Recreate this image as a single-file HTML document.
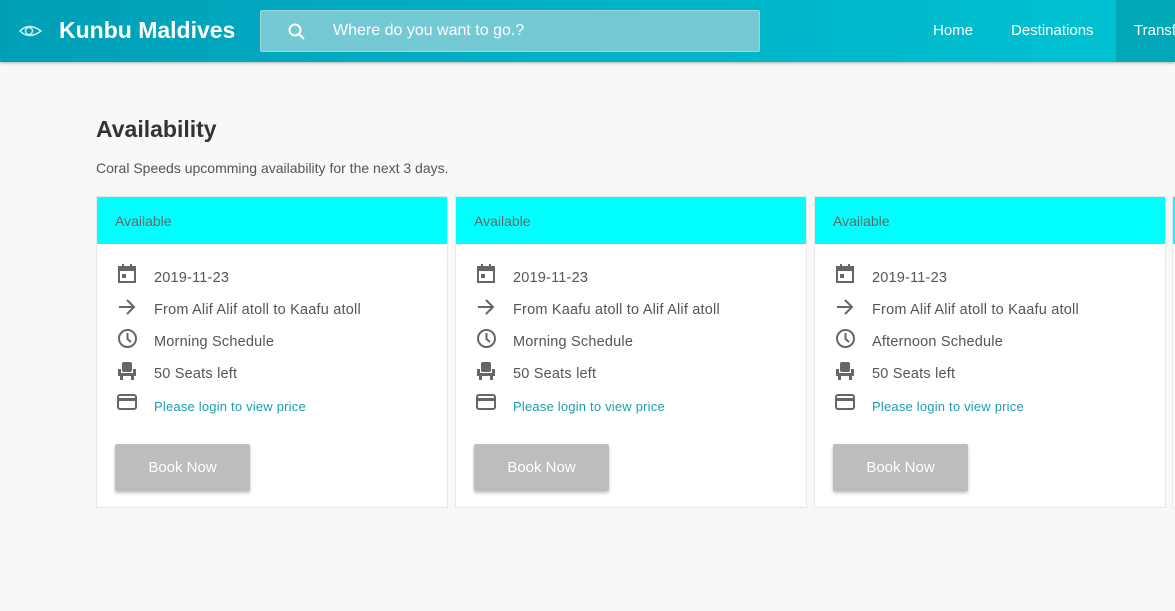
<!DOCTYPE html>
<html><head><style>
body{margin:0;width:1175px;height:611px;overflow:hidden;background:#f8f8f8;font-family:"Liberation Sans",sans-serif;position:relative}
.hdr{position:absolute;left:0;top:0;width:1175px;height:62px;background:linear-gradient(90deg,#009fb7,#00c3d3);box-shadow:0 1px 3px rgba(0,0,0,.3)}
.logo{position:absolute;left:59px;top:17px;color:#fff;font-weight:bold;font-size:23px}
.search{position:absolute;left:260px;top:10px;width:498px;height:40px;background:#74c9d4;border:1px solid #9ad7df;border-radius:2px}
.search span{position:absolute;left:72px;top:11px;color:#fff;font-size:16px}
.nav{position:absolute;top:22px;color:#fff;font-size:15px}
.act{position:absolute;left:1116px;top:0;width:59px;height:62px;background:#00a8b8}
h1{position:absolute;left:96px;top:116px;margin:0;font-size:23px;color:#333}
.sub{position:absolute;left:96px;top:160px;font-size:14px;color:#555}
.card{position:absolute;top:196px;width:352px;height:312px;background:#fff;border:1px solid #e8e8e8;box-sizing:border-box}
.ch{height:47px;background:#00ffff;color:#666;font-size:14px;padding:16px 0 0 18px;box-sizing:border-box}
.row{position:absolute;left:57px;font-size:14.5px;color:#555;letter-spacing:.2px}
.ic{position:absolute;left:20px}
.link{color:#1a9fb0;font-size:13px}
.btn{position:absolute;left:18px;top:247px;width:135px;height:47px;background:#bdbdbd;color:#fff;font-size:15px;text-align:center;line-height:47px;border-radius:2px;box-shadow:0 2px 3px rgba(0,0,0,.25)}
</style></head><body>
<div class="hdr">
<svg style="position:absolute;left:19px;top:22px" width="24" height="18" viewBox="0 0 24 18"><path d="M1 9 Q10 0 22 9 Q10 18 1 9Z" fill="none" stroke="#cdeff3" stroke-width="1.5"/><circle cx="10" cy="9" r="3.5" fill="none" stroke="#cdeff3" stroke-width="1.5"/></svg>
<div class="logo">Kunbu Maldives</div>
<div class="search"><svg style="position:absolute;left:27px;top:12px" width="18" height="18"><circle cx="7" cy="7" r="5.5" fill="none" stroke="#fff" stroke-width="2"/><path d="M11 11 L16 16" stroke="#fff" stroke-width="2"/></svg><span>Where do you want to go.?</span></div>
<div class="act"></div>
<div class="nav" style="left:933px">Home</div>
<div class="nav" style="left:1011px">Destinations</div>
<div class="nav" style="left:1134px">Transfers</div>
</div>
<h1>Availability</h1>
<div class="sub">Coral Speeds upcomming availability for the next 3 days.</div>

<div class="card" style="left:96px"><div class="ch">Available</div>
<svg class="ic" style="top:67px" width="20" height="20" viewBox="0 0 20 20"><rect x="2" y="3" width="16" height="15" fill="none" stroke="#666" stroke-width="2"/><rect x="2" y="3" width="16" height="4" fill="#666"/><rect x="5" y="10" width="4" height="4" fill="#666"/><rect x="5" y="0" width="2" height="4" fill="#666"/><rect x="13" y="0" width="2" height="4" fill="#666"/></svg>
<div class="row" style="top:73px">2019-11-23</div>
<svg class="ic" style="top:100px" width="20" height="20"><path d="M2 10H17M10 3L17 10L10 17" fill="none" stroke="#666" stroke-width="2"/></svg>
<div class="row" style="top:105px">From Alif Alif atoll to Kaafu atoll</div>
<svg class="ic" style="top:131px" width="21" height="21"><circle cx="10.5" cy="10.5" r="8.5" fill="none" stroke="#666" stroke-width="2"/><path d="M10.5 5V11L14 14" fill="none" stroke="#666" stroke-width="2"/></svg>
<div class="row" style="top:137px">Morning Schedule</div>
<svg class="ic" style="top:164px" width="20" height="20"><rect x="5" y="1" width="10" height="10" rx="2" fill="#666"/><rect x="1" y="8" width="3" height="4" fill="#666"/><rect x="16" y="8" width="3" height="4" fill="#666"/><rect x="1" y="12" width="18" height="3" fill="#666"/><rect x="3" y="15" width="3" height="4" fill="#666"/><rect x="14" y="15" width="3" height="4" fill="#666"/></svg>
<div class="row" style="top:169px">50 Seats left</div>
<svg class="ic" style="top:196px" width="20" height="18"><rect x="1" y="2" width="18" height="14" rx="2" fill="none" stroke="#666" stroke-width="2"/><rect x="1" y="5" width="18" height="3" fill="#666"/></svg>
<div class="row link" style="top:202px">Please login to view price</div>
<div class="btn">Book Now</div></div>

<div class="card" style="left:455px"><div class="ch">Available</div>
<svg class="ic" style="top:67px" width="20" height="20" viewBox="0 0 20 20"><rect x="2" y="3" width="16" height="15" fill="none" stroke="#666" stroke-width="2"/><rect x="2" y="3" width="16" height="4" fill="#666"/><rect x="5" y="10" width="4" height="4" fill="#666"/><rect x="5" y="0" width="2" height="4" fill="#666"/><rect x="13" y="0" width="2" height="4" fill="#666"/></svg>
<div class="row" style="top:73px">2019-11-23</div>
<svg class="ic" style="top:100px" width="20" height="20"><path d="M2 10H17M10 3L17 10L10 17" fill="none" stroke="#666" stroke-width="2"/></svg>
<div class="row" style="top:105px">From Kaafu atoll to Alif Alif atoll</div>
<svg class="ic" style="top:131px" width="21" height="21"><circle cx="10.5" cy="10.5" r="8.5" fill="none" stroke="#666" stroke-width="2"/><path d="M10.5 5V11L14 14" fill="none" stroke="#666" stroke-width="2"/></svg>
<div class="row" style="top:137px">Morning Schedule</div>
<svg class="ic" style="top:164px" width="20" height="20"><rect x="5" y="1" width="10" height="10" rx="2" fill="#666"/><rect x="1" y="8" width="3" height="4" fill="#666"/><rect x="16" y="8" width="3" height="4" fill="#666"/><rect x="1" y="12" width="18" height="3" fill="#666"/><rect x="3" y="15" width="3" height="4" fill="#666"/><rect x="14" y="15" width="3" height="4" fill="#666"/></svg>
<div class="row" style="top:169px">50 Seats left</div>
<svg class="ic" style="top:196px" width="20" height="18"><rect x="1" y="2" width="18" height="14" rx="2" fill="none" stroke="#666" stroke-width="2"/><rect x="1" y="5" width="18" height="3" fill="#666"/></svg>
<div class="row link" style="top:202px">Please login to view price</div>
<div class="btn">Book Now</div></div>

<div class="card" style="left:814px"><div class="ch">Available</div>
<svg class="ic" style="top:67px" width="20" height="20" viewBox="0 0 20 20"><rect x="2" y="3" width="16" height="15" fill="none" stroke="#666" stroke-width="2"/><rect x="2" y="3" width="16" height="4" fill="#666"/><rect x="5" y="10" width="4" height="4" fill="#666"/><rect x="5" y="0" width="2" height="4" fill="#666"/><rect x="13" y="0" width="2" height="4" fill="#666"/></svg>
<div class="row" style="top:73px">2019-11-23</div>
<svg class="ic" style="top:100px" width="20" height="20"><path d="M2 10H17M10 3L17 10L10 17" fill="none" stroke="#666" stroke-width="2"/></svg>
<div class="row" style="top:105px">From Alif Alif atoll to Kaafu atoll</div>
<svg class="ic" style="top:131px" width="21" height="21"><circle cx="10.5" cy="10.5" r="8.5" fill="none" stroke="#666" stroke-width="2"/><path d="M10.5 5V11L14 14" fill="none" stroke="#666" stroke-width="2"/></svg>
<div class="row" style="top:137px">Afternoon Schedule</div>
<svg class="ic" style="top:164px" width="20" height="20"><rect x="5" y="1" width="10" height="10" rx="2" fill="#666"/><rect x="1" y="8" width="3" height="4" fill="#666"/><rect x="16" y="8" width="3" height="4" fill="#666"/><rect x="1" y="12" width="18" height="3" fill="#666"/><rect x="3" y="15" width="3" height="4" fill="#666"/><rect x="14" y="15" width="3" height="4" fill="#666"/></svg>
<div class="row" style="top:169px">50 Seats left</div>
<svg class="ic" style="top:196px" width="20" height="18"><rect x="1" y="2" width="18" height="14" rx="2" fill="none" stroke="#666" stroke-width="2"/><rect x="1" y="5" width="18" height="3" fill="#666"/></svg>
<div class="row link" style="top:202px">Please login to view price</div>
<div class="btn">Book Now</div></div>

<div class="card" style="left:1172px"><div class="ch"></div></div>
</body></html>
